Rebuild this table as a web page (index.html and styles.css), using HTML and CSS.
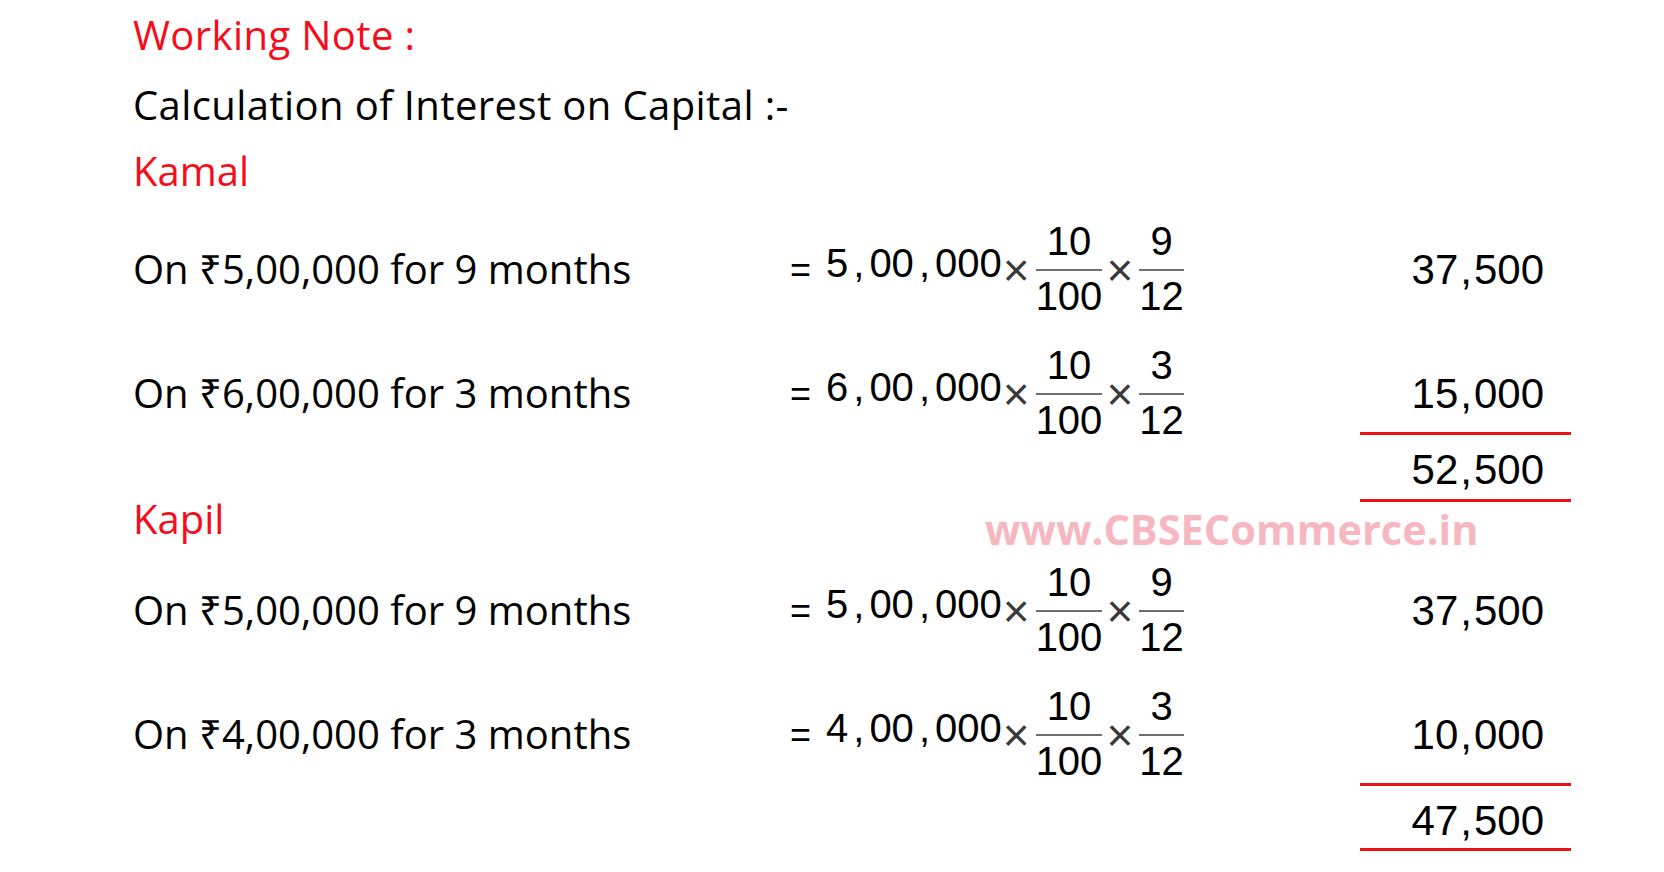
FILE: index.html
```html
<!DOCTYPE html>
<html lang="en">
<head>
<meta charset="utf-8">
<title>Working Note</title>
<link rel="stylesheet" href="styles.css">
</head>
<body>
<div class="page">
  <p class="title">Working Note :</p>
  <p class="subtitle">Calculation of Interest on Capital :-</p>

  <section class="partner">
    <h2 class="name">Kamal</h2>
    <div class="row">
      <div class="label">On ₹5,00,000 for 9 months</div>
      <div class="eq">
        <span class="eqsign">=</span>
        <span class="num">5<span class="c">,</span>00<span class="c">,</span>000</span>
        <span class="times">×</span>
        <span class="frac"><span class="top">10</span><span class="bot">100</span></span>
        <span class="times">×</span>
        <span class="frac"><span class="top">9</span><span class="bot">12</span></span>
      </div>
      <div class="amt">37<span class="rc">,</span>500</div>
    </div>
    <div class="row">
      <div class="label">On ₹6,00,000 for 3 months</div>
      <div class="eq">
        <span class="eqsign">=</span>
        <span class="num">6<span class="c">,</span>00<span class="c">,</span>000</span>
        <span class="times">×</span>
        <span class="frac"><span class="top">10</span><span class="bot">100</span></span>
        <span class="times">×</span>
        <span class="frac"><span class="top">3</span><span class="bot">12</span></span>
      </div>
      <div class="amt">15<span class="rc">,</span>000</div>
    </div>
    <div class="total"><div class="total-amt">52<span class="rc">,</span>500</div></div>
  </section>

  <section class="partner second">
    <h2 class="name">Kapil</h2>
    <div class="row">
      <div class="label">On ₹5,00,000 for 9 months</div>
      <div class="eq">
        <span class="eqsign">=</span>
        <span class="num">5<span class="c">,</span>00<span class="c">,</span>000</span>
        <span class="times">×</span>
        <span class="frac"><span class="top">10</span><span class="bot">100</span></span>
        <span class="times">×</span>
        <span class="frac"><span class="top">9</span><span class="bot">12</span></span>
      </div>
      <div class="amt">37<span class="rc">,</span>500</div>
    </div>
    <div class="row">
      <div class="label">On ₹4,00,000 for 3 months</div>
      <div class="eq">
        <span class="eqsign">=</span>
        <span class="num">4<span class="c">,</span>00<span class="c">,</span>000</span>
        <span class="times">×</span>
        <span class="frac"><span class="top">10</span><span class="bot">100</span></span>
        <span class="times">×</span>
        <span class="frac"><span class="top">3</span><span class="bot">12</span></span>
      </div>
      <div class="amt">10<span class="rc">,</span>000</div>
    </div>
    <div class="total"><div class="total-amt">47<span class="rc">,</span>500</div></div>
  </section>

  <div class="watermark">www.CBSECommerce.in</div>
</div>
</body>
</html>
```

FILE: styles.css
```css
* { box-sizing: border-box; }
html, body { margin: 0; padding: 0; background: #ffffff; }
body {
  width: 1664px;
  height: 872px;
  overflow: hidden;
  font-family: "Open Sans", "Noto Sans", "DejaVu Sans", sans-serif;
  color: #000000;
}
.page {
  position: relative;
  padding: 0 0 0 133px;
  height: 872px;
}
.title {
  margin: 0;
  font-size: 40px;
  line-height: 70px;
  letter-spacing: 0.4px;
  color: #f50d1a;
}
.subtitle {
  margin: 0;
  font-size: 40px;
  line-height: 70px;
  letter-spacing: 0.4px;
}
.name {
  margin: 0;
  font-weight: normal;
  font-size: 40px;
  line-height: 62px;
  color: #f50d1a;
}
.row {
  display: flex;
  align-items: center;
  height: 82px;
}
.partner .row + .row { margin-top: 42px; }
.partner:first-of-type .row:first-of-type { margin-top: 27px; }
.label {
  width: 657px;
  font-size: 40px;
  white-space: nowrap;
  margin-bottom: 4px;
}
.eq {
  display: flex;
  align-items: center;
  width: 571px;
  font-family: "Liberation Sans", Arial, sans-serif;
}
.eqsign {
  font-size: 36px;
  width: 36px;
}
.num {
  font-size: 40px;
  margin-bottom: 14px;
}
.c { margin: 0 5px; }
.rc { margin: 0 2px; }
.times {
  font-size: 46px;
  line-height: 46px;
  color: #3a3a3a;
  margin: 0 3px 0 1px;
}
.frac {
  display: inline-flex;
  flex-direction: column;
  align-items: center;
  font-size: 40px;
  margin: 0 3px;
}
.frac .top {
  line-height: 40px;
  padding: 0 0 8px;
  border-bottom: 2px solid #6e6e6e;
}
.frac .bot {
  line-height: 40px;
  padding: 5px 0 3px;
}
.frac .top, .frac .bot { align-self: stretch; text-align: center; }
.amt {
  width: 210px;
  padding-right: 27px;
  text-align: right;
  font-family: "Liberation Sans", Arial, sans-serif;
  font-size: 42px;
}
.total {
  display: flex;
  justify-content: flex-end;
  padding-right: 93px;
  margin-top: -3px;
}
.total-amt {
  width: 211px;
  height: 70px;
  border-top: 3px solid #ee1111;
  border-bottom: 3px solid #ee1111;
  padding: 8px 27px 0 0;
  text-align: right;
  font-family: "Liberation Sans", Arial, sans-serif;
  font-size: 42px;
  line-height: 54px;
}
.second { margin-top: -14px; }
.second .row:first-of-type { margin-top: 20px; }
.second .total { margin-top: 7px; }
.second .total-amt { height: 68px; }
.watermark {
  position: absolute;
  left: 985px;
  top: 501px;
  font-family: "Open Sans", "Noto Sans", sans-serif;
  font-weight: bold;
  font-size: 41.5px;
  color: #f6b7c0;
  white-space: nowrap;
}
```
